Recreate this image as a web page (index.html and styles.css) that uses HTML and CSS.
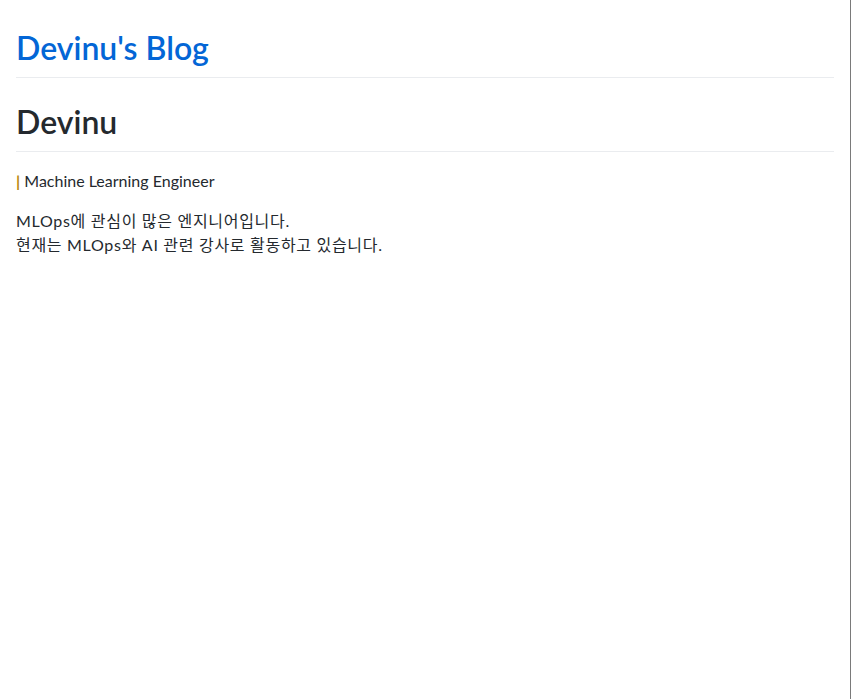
FILE: index.html
```html
<!DOCTYPE html>
<html lang="ko">
<head>
    <meta charset="UTF-8">
    <meta name="viewport" content="width=device-width, initial-scale=1.0">
    <title>Devinu's Blog</title>
    <link rel="stylesheet" href="styles.css">
</head>
<body>
    <div class="page">
        <!-- 사이트 제목 -->
        <h1 class="site-title"><a href="#">Devinu's Blog</a></h1>

        <!-- 소개 -->
        <h1>Devinu</h1>
        <p><span class="bar">|</span> Machine Learning Engineer</p>
        <p class="intro">MLOps에 관심이 많은 엔지니어입니다.<br>
           현재는 MLOps와 AI 관련 강사로 활동하고 있습니다.</p>
    </div>
</body>
</html>
```

FILE: styles.css
```css
:root {
    --link-color: #0366d6;
    --text-color: #24292e;
    --rule-color: #eaecef;
}
html, body {
    margin: 0;
    height: 100%;
}
body {
    font-family: "Segoe UI", Lato, "Noto Sans CJK KR", sans-serif;
    font-size: 16px;
    line-height: 1.5;
    color: var(--text-color);
}
.page {
    box-sizing: border-box;
    width: 851px;
    min-height: 100%;
    padding: 28px 16px 16px;
    border-right: 1px solid #7a7a7a;
}
h1 {
    font-size: 32px;
    font-weight: 600;
    line-height: 1.25;
    margin: 0 0 24px;
    padding-bottom: 9px;
    border-bottom: 1px solid var(--rule-color);
}
.site-title a {
    color: var(--link-color);
    text-decoration: none;
}
p {
    margin: 0 0 16px;
}
h1 + p {
    margin-top: -7px;
}
.bar {
    color: #b8860b;
    font-weight: 700;
}
.intro {
    letter-spacing: 0.7px;
}
```
